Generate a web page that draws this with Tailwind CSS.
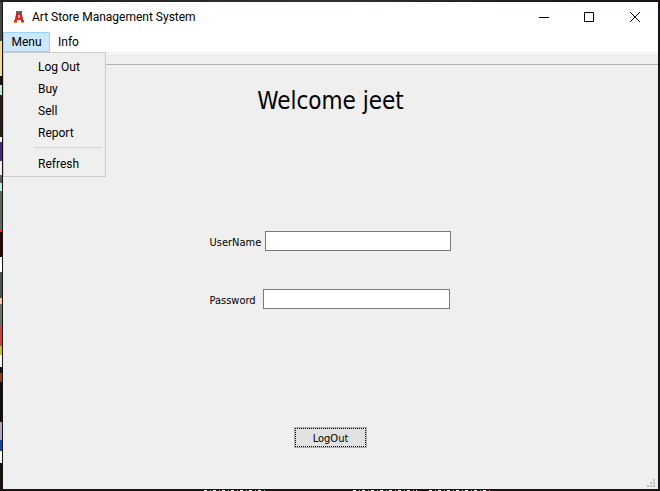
<!DOCTYPE html>
<html lang="en">
<head>
<meta charset="utf-8">
<title>Art Store Management System</title>
<script src="https://cdn.jsdelivr.net/npm/@tailwindcss/browser@4"></script>
</head>
<body class="flex h-screen flex-col overflow-hidden bg-[#17110f] font-[Roboto,'Open_Sans',sans-serif] text-[12px] leading-4 text-black">
  <div class="h-[2px] shrink-0 bg-linear-to-r from-[#1d211c] via-[#2c332c] to-[#1c1012]"></div>
  <div class="flex min-h-0 flex-1">
    <div class="flex w-[2px] shrink-0 flex-col bg-[#1a1010]" aria-hidden="true">
      <i class="h-[39px] bg-[#3f4841]"></i><i class="h-[35px] bg-[#f3d88f]"></i><i class="h-[9px] bg-[#16130f]"></i><i class="h-[10px] bg-[#b5efdc]"></i><i class="h-[42px] bg-[#2a1c1b]"></i><i class="h-[5px] bg-white"></i><i class="h-[19px] bg-[#4b2382]"></i><i class="h-[14px] bg-[#eeeeee]"></i><i class="h-[8px] bg-[#59615a]"></i><i class="h-[8px] bg-[#b5efdc]"></i><i class="h-[38px] bg-[#5d6a62]"></i><i class="h-[3px] bg-[#ff2200]"></i><i class="h-[25px] bg-[#2c0302]"></i><i class="h-[15px] bg-white"></i><i class="h-[26px] bg-[#4a5750]"></i><i class="h-[6px] bg-[#ffc892]"></i><i class="h-[22px] bg-[#65756a]"></i><i class="h-[20px] bg-[#cf4038]"></i><i class="h-[9px] bg-[#c9bf32]"></i><i class="h-[12px] bg-white"></i><i class="h-[6px] bg-[#1a1010]"></i><i class="h-[9px] bg-[#93410a]"></i><i class="h-[40px] bg-[#150b0c]"></i><i class="h-[18px] bg-[#aaa6c8]"></i><i class="h-[11px] bg-[#0d4aa5]"></i><i class="h-[12px] bg-white"></i>
    </div>
    <main class="ml-px flex min-w-0 flex-1 flex-col bg-[#efefef]">
      <header class="flex h-[30px] shrink-0 items-center bg-white">
        <svg class="ml-2 h-4 w-4" viewBox="0 0 16 16" aria-hidden="true">
          <path d="M5 2h6v3H5z" fill="#6e5f5f"/>
          <path d="M5 5h6l1 5H4z" fill="#b03030"/>
          <path d="M4 9h8v2h1v3h-3v-3H6v3H3v-3h1z" fill="#ee2412"/>
          <path d="M3 13h3v1H3zM10 13h3v1h-3z" fill="#ff9a3c"/>
          <path d="M7 6h2v3H7z" fill="#d9a8a4"/>
        </svg>
        <h1 class="ml-[5px] flex-1">Art Store Management System</h1>
        <button class="flex h-full w-[45px] items-center justify-center" aria-label="Minimize"><svg width="10" height="10" shape-rendering="crispEdges"><path d="M0 5h10v1H0z"/></svg></button>
        <button class="flex h-full w-[46px] items-center justify-center" aria-label="Maximize"><svg width="10" height="10"><path d="M.5.5h9v9h-9z" fill="none" stroke="#000"/></svg></button>
        <button class="flex h-full w-[46px] items-center justify-center" aria-label="Close"><svg width="10" height="10"><path d="M0 0l10 10M10 0L0 10" stroke="#000"/></svg></button>
      </header>
      <nav class="relative flex h-[22px] shrink-0 border-b border-white bg-white">
        <div class="absolute inset-x-0 bottom-0 h-px bg-[#eeeeee]"></div>
        <button class="relative h-5 w-[47px] border border-[#99d1ff] bg-[#cce8ff]" aria-expanded="true">Menu</button>
        <button class="relative h-5 px-2">Info</button>
        <div class="absolute top-5 left-0 z-10 flex w-[103px] flex-col border border-[#cccccc] bg-[#efefef] pt-[3px] pb-px" role="menu">
          <button class="h-[22px] pl-[34px] text-left" role="menuitem">Log Out</button>
          <button class="h-[22px] pl-[34px] text-left" role="menuitem">Buy</button>
          <button class="h-[22px] pl-[34px] text-left" role="menuitem">Sell</button>
          <button class="h-[22px] pl-[34px] text-left" role="menuitem">Report</button>
          <div class="mt-[3px] mr-[3px] mb-[5px] ml-[30px] h-px bg-[#d5d5d5]"></div>
          <button class="h-[22px] pl-[34px] text-left" role="menuitem">Refresh</button>
        </div>
      </nav>
      <section class="mt-[10px] flex min-h-0 flex-1 flex-col items-center border-t border-[#b4b4b4] font-['DejaVu_Sans_Condensed','DejaVu_Sans',sans-serif] text-[11px]">
        <h2 class="mt-5 text-[24px] leading-8">Welcome jeet</h2>
        <form class="mt-[114px] flex w-[242px] flex-col items-start">
          <div class="flex w-full items-center pr-px">
            <label for="user" class="mr-[5px] w-[50px] pt-[3px]">UserName</label>
            <input id="user" type="text" class="h-5 min-w-0 flex-1 border border-[#7a7a7a] bg-white px-1 outline-none">
          </div>
          <div class="mt-[38px] flex w-full items-center pr-[2px]">
            <label for="pass" class="mr-[5px] w-[48px] pt-[3px]">Password</label>
            <input id="pass" type="password" class="h-5 min-w-0 flex-1 border border-[#7a7a7a] bg-white px-1 outline-none">
          </div>
          <button type="button" class="mt-[118px] h-[21px] w-[73px] self-center border border-[#adadad] bg-[#e1e1e1]"><span class="flex h-full items-center justify-center border border-dotted border-black pt-[3px]">LogOut</span></button>
        </form>
        <svg class="mt-auto mr-[3px] mb-[2px] shrink-0 self-end" width="8" height="8" fill="#bfbfbf" shape-rendering="crispEdges" aria-hidden="true"><path d="M6 0h2v2H6zM3 3h2v2H3zM6 3h2v2H6zM0 6h2v2H0zM3 6h2v2H3zM6 6h2v2H6z"/></svg>
      </section>
    </main>
    <div class="w-[2px] shrink-0 bg-[#15141a]"></div>
  </div>
  <div class="flex h-[2px] shrink-0 items-end bg-[#1b1214]" aria-hidden="true">
    <i class="ml-[204px] h-px w-[63px] bg-[repeating-linear-gradient(90deg,#fff_0_3px,#1b1214_3px_6px,#9bb_6px_7px,#1b1214_7px_9px)]"></i>
    <i class="ml-[86px] h-px w-[64px] bg-[repeating-linear-gradient(90deg,#fff_0_3px,#1b1214_3px_6px,#9bb_6px_7px,#1b1214_7px_9px)]"></i>
    <i class="ml-[12px] h-px w-[63px] bg-[repeating-linear-gradient(90deg,#fff_0_3px,#1b1214_3px_6px,#9bb_6px_7px,#1b1214_7px_9px)]"></i>
  </div>
</body>
</html>
